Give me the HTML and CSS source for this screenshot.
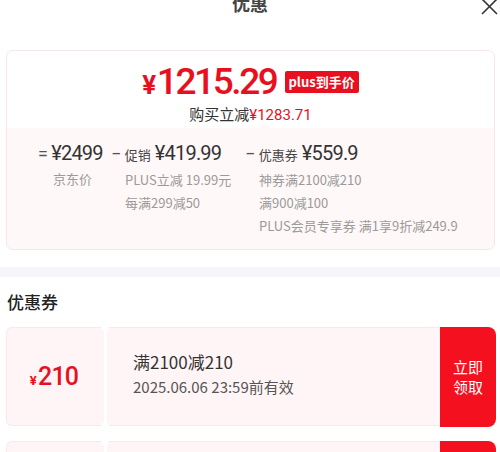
FILE: index.html
```html
<!DOCTYPE html>
<html lang="zh">
<head>
    <meta charset="UTF-8">
    <meta name="viewport" content="width=device-width, initial-scale=1.0">
    <title>优惠</title>
    <link rel="stylesheet" href="styles.css">
</head>
<body>
    <div class="header">
        <div class="title">优惠</div>
        <svg class="close" width="18" height="18" viewBox="0 0 18 18">
            <path d="M2 1 L17 16 M17 1 L2 16" stroke="#333" stroke-width="1.6" fill="none"/>
        </svg>
    </div>

    <div class="summary">
        <div class="summary-top">
            <div class="final">
                <span class="final-price"><span class="yen">¥</span>1215.29</span>
                <span class="badge">plus到手价</span>
            </div>
            <div class="saved">购买立减<span class="red">¥1283.71</span></div>
        </div>
        <div class="breakdown">
            <div class="col col-1">
                <div class="col-head"><span class="op">=</span> ¥2499</div>
                <div class="col-line">京东价</div>
            </div>
            <div class="col col-2">
                <div class="col-head"><span class="op">−</span> <span class="lbl">促销</span> ¥419.99</div>
                <div class="col-line">PLUS立减 19.99元</div>
                <div class="col-line">每满299减50</div>
            </div>
            <div class="col col-3">
                <div class="col-head"><span class="op">−</span> <span class="lbl">优惠券</span> ¥559.9</div>
                <div class="col-line">神券满2100减210</div>
                <div class="col-line">满900减100</div>
                <div class="col-line">PLUS会员专享券 满1享9折减249.9</div>
            </div>
        </div>
    </div>

    <div class="band"></div>

    <h3 class="section-title">优惠券</h3>

    <div class="coupon">
        <div class="stub"><span class="stub-yen">¥</span>210</div>
        <div class="coupon-body">
            <div class="coupon-name">满2100减210</div>
            <div class="coupon-date">2025.06.06 23:59前有效</div>
        </div>
        <div class="coupon-btn">立即<br>领取</div>
    </div>
    <div class="coupon">
        <div class="stub"></div>
        <div class="coupon-body"></div>
        <div class="coupon-btn"></div>
    </div>
</body>
</html>
```

FILE: styles.css
```css
body {
    margin: 0;
    font-family: "Noto Sans CJK SC", "Noto Sans", sans-serif;
    background: #fff;
    color: #333;
    width: 500px;
    overflow: hidden;
}
.header {
    position: relative;
    height: 50px;
    text-align: center;
    display: flow-root;
}
.title {
    font-size: 18px;
    font-weight: bold;
    color: #444;
    line-height: 24px;
    margin-top: -9px;
}
.close {
    position: absolute;
    right: 2px;
    top: -2px;
}
.summary {
    margin: 0 5px 0 6px;
    border: 1px solid #f6e6e8;
    border-radius: 7px;
    overflow: hidden;
    height: 198px;
    background: #fff8f8;
}
.summary-top {
    background: #fff;
    text-align: center;
    height: 77px;
    position: relative;
    padding-top: 8px;
    box-sizing: border-box;
}
.summary-top::after {
    content: "";
    position: absolute;
    left: 251px;
    bottom: 0;
    border: 6px solid transparent;
    border-bottom-color: #fff8f8;
    border-top: 0;
}
.final {
    display: flex;
    justify-content: center;
    align-items: center;
    gap: 6px;
    height: 44px;
}
.final-price {
    font-family: "Roboto", sans-serif;
    font-size: 37px;
    font-weight: 500;
    color: #e8101e;
    letter-spacing: -2.4px;
}
.yen {
    font-size: 26px;
    font-weight: bold;
    margin-right: 3px;
}
.badge {
    background: #e8101e;
    color: #fff;
    font-size: 13px;
    font-weight: bold;
    padding: 0 4px;
    line-height: 22px;
    border-radius: 2px;
    margin-top: 2px;
    margin-left: 2px;
}
.saved {
    font-size: 15px;
    color: #333;
    line-height: 20px;
    margin-top: 1px;
}
.red {
    color: #e8101e;
    font-family: "Roboto", sans-serif;
}
.breakdown {
    display: flex;
    padding: 12px 0 0 31px;
}
.col-head {
    font-family: "Roboto", "Noto Sans CJK SC", sans-serif;
    font-size: 20px;
    color: #333;
    line-height: 26px;
    white-space: nowrap;
    letter-spacing: -0.8px;
}
.op {
    color: #555;
    font-size: 18px;
}
.lbl {
    font-family: "Noto Sans CJK SC", sans-serif;
    font-size: 13px;
    color: #444;
    letter-spacing: 0;
}
.col-line {
    font-size: 13px;
    color: #9a9a9a;
    line-height: 23px;
    white-space: nowrap;
}
.col-1 {
    width: 73px;
}
.col-1 .col-line {
    padding-left: 15px;
}
.col-2 {
    width: 134px;
}
.col-2 .col-line,
.col-3 .col-line {
    padding-left: 14px;
}
.band {
    height: 10px;
    background: #f6f6fa;
    margin-top: 17px;
}
.section-title {
    margin: 13px 0 0 7px;
    font-size: 17px;
    font-weight: 500;
    color: #222;
    line-height: 24px;
}
.coupon {
    display: flex;
    margin: 13px 4px 15px 6px;
    height: 99px;
}
.stub,
.coupon-body {
    background: #fff5f6;
    border: 1px solid #fae8ea;
    position: relative;
}
.stub {
    width: 98px;
    border-radius: 6px 0 0 6px;
    border-right: 0;
    display: flex;
    align-items: center;
    justify-content: center;
    color: #e8101e;
    font-family: "Roboto", sans-serif;
    font-size: 25px;
    font-weight: 500;
    letter-spacing: -0.8px;
    padding-right: 3px;
    box-sizing: border-box;
}
.stub-yen {
    font-size: 13px;
    font-weight: bold;
    margin-top: 7px;
    margin-right: 2px;
}
.stub::after,
.stub::before {
    content: "";
    position: absolute;
    right: -5px;
    width: 8px;
    height: 8px;
    border-radius: 50%;
    background: #fff;
    z-index: 1;
}
.stub::before {
    top: -5px;
}
.stub::after {
    bottom: -5px;
}
.coupon-body {
    flex: 1;
    margin-left: 3px;
    border-left: 0;
    border-right: 0;
    padding: 22px 0 0 26px;
}
.coupon-name {
    font-size: 17px;
    color: #333;
    line-height: 24px;
}
.coupon-date {
    font-family: "Noto Sans CJK SC", sans-serif;
    font-size: 15px;
    color: #555;
    line-height: 22px;
    margin-top: 2px;
}
.coupon-btn {
    width: 56px;
    background: #f5101f;
    color: #fff;
    border-radius: 0 8px 8px 0;
    font-size: 15px;
    line-height: 20px;
    display: flex;
    align-items: center;
    justify-content: center;
    text-align: center;
    height: 100px;
}
```
